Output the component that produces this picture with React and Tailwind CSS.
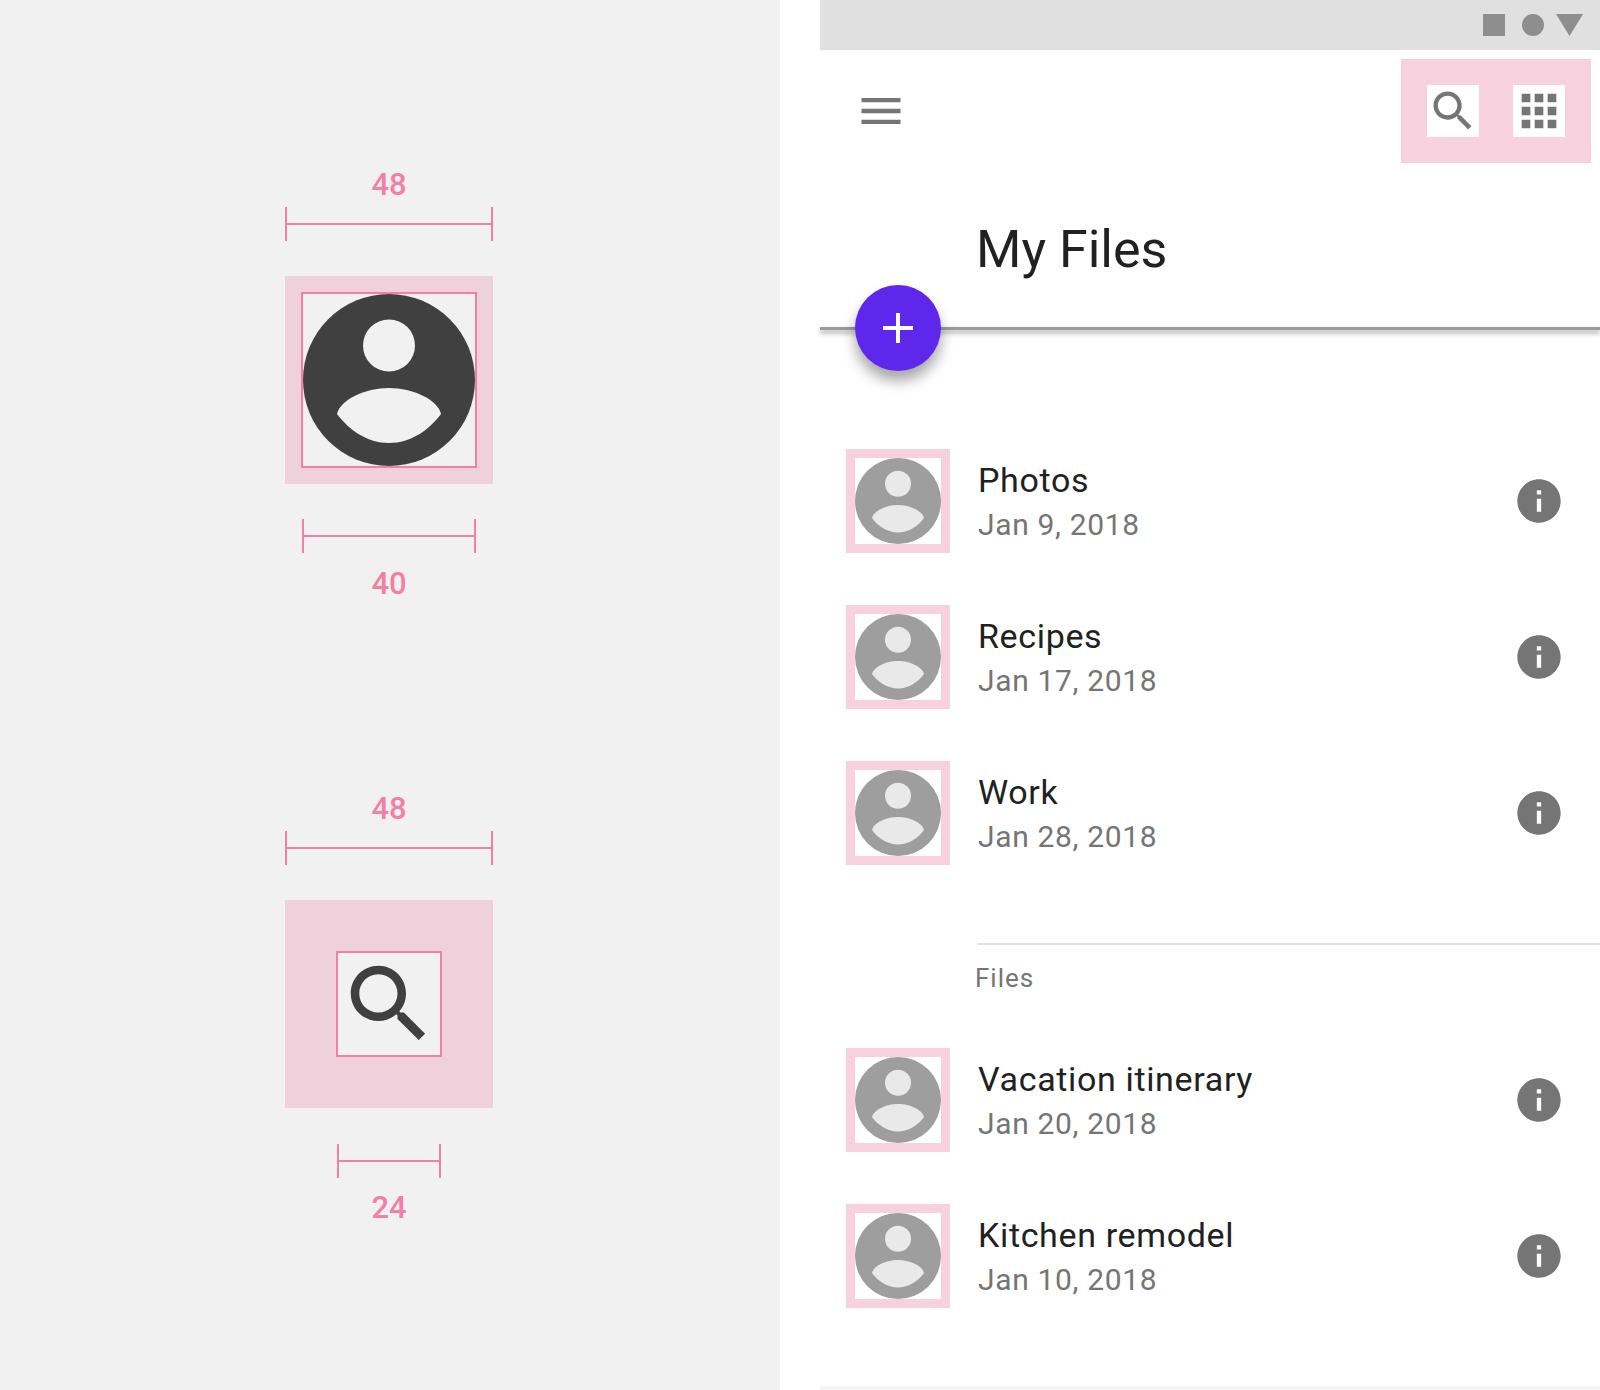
import React from 'react';

const SEARCH = 'M15.5 14h-.79l-.28-.27C15.41 12.59 16 11.11 16 9.5 16 5.91 13.09 3 9.5 3S3 5.91 3 9.5 5.91 16 9.5 16c1.61 0 3.09-.59 4.23-1.57l.27.28v.79l5 4.99L20.49 19l-4.99-5zm-6 0C7.01 14 5 11.99 5 9.5S7.01 5 9.5 5 14 7.01 14 9.5 11.99 14 9.5 14z';
const APPS = 'M4 8h4V4H4v4zm6 12h4v-4h-4v4zm-6 0h4v-4H4v4zm0-6h4v-4H4v4zm6 0h4v-4h-4v4zm6-10v4h4V4h-4zm-6 4h4V4h-4v4zm6 6h4v-4h-4v4zm0 6h4v-4h-4v4z';
const MENU = 'M3 18h18v-2H3v2zm0-5h18v-2H3v2zm0-7v2h18V6H3z';
const INFO = 'M12 2C6.48 2 2 6.48 2 12s4.48 10 10 10 10-4.48 10-10S17.52 2 12 2zm1 15h-2v-6h2v6zm0-8h-2V7h2v2z';

const Icon = ({ d, className }) => (
  <svg viewBox="0 0 24 24" className={className} fill="currentColor">
    <path d={d} />
  </svg>
);

const Person = ({ className, circle, hole }) => (
  <svg viewBox="-86 -86 172 172" className={className}>
    <circle r="86" fill={circle} />
    <circle cy="-34.5" r="26" fill={hole} />
    <path
      d="M-52 34C-49 20-24 8 0 8S49 20 52 34C40 50 22 63 0 63S-40 50-52 34Z"
      fill={hole}
    />
  </svg>
);

const Label = ({ children }) => (
  <div className="h-9 w-[208px] text-center text-[31px] leading-9 font-medium text-[#f27fa5]">{children}</div>
);

const Measure = ({ className }) => (
  <div className={`h-[34px] flex items-center border-x-2 border-[#f27fa5] ${className}`}>
    <div className="h-[2px] w-full bg-[#f27fa5]" />
  </div>
);

const Row = ({ title, date }) => (
  <div className="h-[104px] flex items-center pl-[26px] pr-[35px]">
    <div className="h-[104px] w-[104px] shrink-0 p-[9px] bg-[#f8d1df]">
      <div className="h-full w-full bg-white flex items-center justify-center">
        <Person className="w-[86px] h-[86px]" circle="#9e9e9e" hole="#e9e9e9" />
      </div>
    </div>
    <div className="ml-[28px] flex-1 pt-[5px]">
      <div className="text-[34px] leading-[42px] tracking-[0.65px] text-[#212121]">{title}</div>
      <div className="text-[30px] leading-[48px] tracking-[0.65px] text-[#757575]">{date}</div>
    </div>
    <Icon d={INFO} className="w-[52px] h-[52px] text-[#757575]" />
  </div>
);

export default function App() {
  return (
    <div className="flex w-[1600px] h-[1390px] bg-white font-['Roboto',sans-serif] overflow-hidden">
      {/* spec panel */}
      <div className="w-[780px] h-[1390px] shrink-0 bg-[#f1f1f1] pl-[285px] pt-[167px]">
        <Label>48</Label>
        <Measure className="mt-1 w-[208px]" />
        <div className="mt-[35px] h-[208px] w-[208px] bg-[#efd1dc] flex items-center justify-center">
          <div className="h-[176px] w-[176px] border-2 border-[#f27fa5] bg-[#f1f1f1]">
            <Person className="w-[172px] h-[172px]" circle="#404040" hole="#f1f1f1" />
          </div>
        </div>
        <Measure className="mt-[35px] ml-[17px] w-[174px]" />
        <div className="mt-[13px]"><Label>40</Label></div>

        <div className="mt-[189px]"><Label>48</Label></div>
        <Measure className="mt-1 w-[208px]" />
        <div className="mt-[35px] h-[208px] w-[208px] bg-[#efd1dc] flex items-center justify-center">
          <div className="h-[106px] w-[106px] border-2 border-[#f27fa5] bg-[#f1f1f1]">
            <Icon d={SEARCH} className="w-[102px] h-[102px] text-[#404040]" />
          </div>
        </div>
        <Measure className="mt-9 ml-[52px] w-[104px]" />
        <div className="mt-3"><Label>24</Label></div>
      </div>

      <div className="w-10 shrink-0" />

      {/* phone */}
      <div className="w-[780px] shrink-0 h-[1390px] flex flex-col">
        <div className="h-[50px] bg-[#e0e0e0] flex items-center justify-end pr-[17px] shrink-0">
          <div className="h-[22px] w-[22px] bg-[#8e8e8e]" />
          <div className="ml-[17px] h-[22px] w-[22px] rounded-full bg-[#8e8e8e]" />
          <svg viewBox="0 0 27 22" className="ml-3 h-[22px] w-[27px]">
            <polygon points="0,0 27,0 13.5,22" fill="#8e8e8e" />
          </svg>
        </div>

        <div className="h-[113px] pt-[9px] pl-[35px] pr-[9px] flex justify-between items-start shrink-0">
          <Icon d={MENU} className="mt-[26px] w-[52px] h-[52px] text-[#757575]" />
          <div className="h-[104px] w-[190px] bg-[#f8d1df] flex items-center justify-center gap-[34px]">
            <div className="h-[52px] w-[52px] bg-white">
              <Icon d={SEARCH} className="w-[52px] h-[52px] text-[#757575]" />
            </div>
            <div className="h-[52px] w-[52px] bg-white">
              <Icon d={APPS} className="w-[52px] h-[52px] text-[#757575]" />
            </div>
          </div>
        </div>

        <div className="h-[164px] pl-[156px] pt-[55px] shrink-0">
          <h1 className="text-[52px] leading-[64px] font-normal text-[#212121]">My Files</h1>
        </div>

        <div className="relative h-[3px] shrink-0 bg-[#9a9a9a] shadow-[0_3px_5px_rgba(0,0,0,0.4)]">
          <div className="absolute left-[35px] -top-[42px] h-[86px] w-[86px] rounded-full bg-[#5e27eb] flex items-center justify-center shadow-[0_10px_14px_rgba(0,0,0,0.35)]">
            <svg viewBox="0 0 32 32" className="h-8 w-8">
              <path d="M14 1h4v13h13v4H18v13h-4V18H1v-4h13Z" fill="#fff" />
            </svg>
          </div>
        </div>

        <div className="mt-[119px] flex flex-col gap-[52px]">
          <Row title="Photos" date="Jan 9, 2018" />
          <Row title="Recipes" date="Jan 17, 2018" />
          <Row title="Work" date="Jan 28, 2018" />
        </div>

        <div className="mt-[78px] ml-[158px] h-[2px] bg-[#e0e0e0] shrink-0" />
        <div className="ml-[155px] mt-[19px] h-[28px] text-[26px] leading-[28px] tracking-[1px] text-[#757575]">Files</div>

        <div className="mt-[56px] flex flex-col gap-[52px]">
          <Row title="Vacation itinerary" date="Jan 20, 2018" />
          <Row title="Kitchen remodel" date="Jan 10, 2018" />
        </div>

        <div className="mt-auto h-1 bg-[#f5f5f5]" />
      </div>
    </div>
  );
}
